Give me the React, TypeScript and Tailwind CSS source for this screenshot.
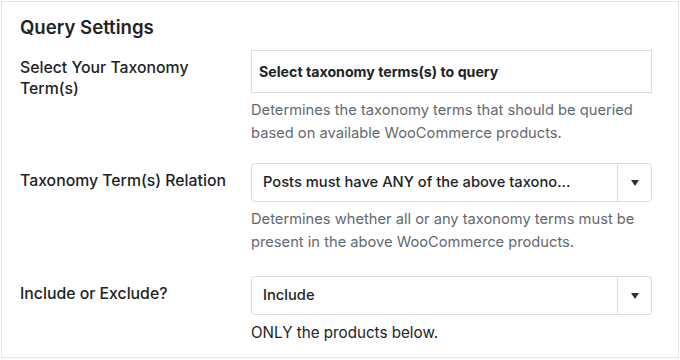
const font = { fontFamily: "Inter, 'Noto Sans', sans-serif" };

function Caret() {
  return (
    <div className="flex w-[34px] items-center justify-center self-stretch border-l border-[#dcdcde]">
      <svg width="10" height="8" viewBox="0 0 10 8">
        <path d="M1 1h8L5 7z" fill="#2c3338" />
      </svg>
    </div>
  );
}

function Select({ value }: { value: string }) {
  return (
    <div className="flex h-[39px] items-center rounded-[4px] border border-[#dcdcde] bg-white">
      <span className="flex-1 truncate pl-[11px] text-[14.7px] font-medium text-[#1d2327]">
        {value}
      </span>
      <Caret />
    </div>
  );
}

function Row({
  label,
  children,
  className,
}: {
  label: React.ReactNode;
  children: React.ReactNode;
  className?: string;
}) {
  return (
    <div className={"flex " + (className ?? "")}>
      <div className="w-[231px] shrink-0 pt-[7px] pr-4 text-[15.8px] leading-[21px] font-medium text-[#1d2327]">
        {label}
      </div>
      <div className="w-[401px]">{children}</div>
    </div>
  );
}

export default function App() {
  return (
    <div className="h-[360px] w-[680px] bg-white p-[1px]" style={font}>
      <div className="h-[357px] w-[678px] border border-[#e2e4e7] bg-white pl-[18px]">
        <h2 className="pt-[14px] text-[18.6px] leading-[22px] font-semibold text-[#1d2327]">
          Query Settings
        </h2>
        <Row label={<>Select Your Taxonomy<br />Term(s)</>} className="mt-[12px]">
          <div className="flex h-[43px] items-center border border-[#dcdcde] bg-white pl-[7px] text-[14.2px] font-bold text-[#1d2327]">
            Select taxonomy terms(s) to query
          </div>
          <p className="mt-[6px] text-[14.7px] leading-[22.5px] text-[#646970]">
            Determines the taxonomy terms that should be queried based on available WooCommerce products.
          </p>
        </Row>
        <Row label="Taxonomy Term(s) Relation" className="mt-[19px]">
          <Select value="Posts must have ANY of the above taxono..." />
          <p className="mt-[6px] text-[14.7px] leading-[22.5px] text-[#646970]">
            Determines whether all or any taxonomy terms must be present in the above WooCommerce products.
          </p>
        </Row>
        <Row label="Include or Exclude?" className="mt-[23px]">
          <Select value="Include" />
          <p className="mt-[7px] text-[15.2px] leading-[22.5px] text-[#1d2327]">
            ONLY the products below.
          </p>
        </Row>
      </div>
    </div>
  );
}
